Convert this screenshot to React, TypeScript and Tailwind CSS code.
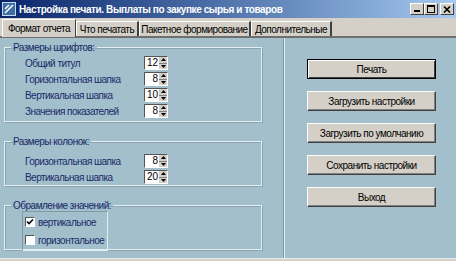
import React from 'react';

const FONT = { fontFamily: '"Liberation Sans", Arial, sans-serif' };

const fontRows = [
  { label: 'Общий титул', value: 12 },
  { label: 'Горизонтальная шапка', value: 8 },
  { label: 'Вертикальная шапка', value: 10 },
  { label: 'Значения показателей', value: 8 },
];

const columnRows = [
  { label: 'Горизонтальная шапка', value: 8 },
  { label: 'Вертикальная шапка', value: 20 },
];

const tabs = [
  { label: 'Формат отчета', w: 'w-[74px]' },
  { label: 'Что печатать', w: 'w-[63px]' },
  { label: 'Пакетное формирование', w: 'w-[112px]' },
  { label: 'Дополнительные', w: 'w-[81px]' },
];

const buttons = ['Печать', 'Загрузить настройки', 'Загрузить по умолчанию', 'Сохранить настройки', 'Выход'];

function Spin({ value }: { value: number }) {
  return (
    <div className="flex h-[14px] w-[24px] border border-t-[#555] border-l-[#555] border-r-white border-b-white bg-white">
      <span className="flex-1 pr-[1px] text-right text-[10px] leading-[12px] text-black">{value}</span>
      <div className="flex w-[8px] flex-col bg-[#d4d0c8]">
        <div className="flex flex-1 items-center justify-center border-b border-[#808080]">
          <svg width="5" height="3" viewBox="0 0 5 3">
            <path d="M2.5 0 L5 3 L0 3 Z" fill="#000" />
          </svg>
        </div>
        <div className="flex flex-1 items-center justify-center">
          <svg width="5" height="3" viewBox="0 0 5 3">
            <path d="M0 0 L5 0 L2.5 3 Z" fill="#000" />
          </svg>
        </div>
      </div>
    </div>
  );
}

function Group({ title, className, children }: { title: string; className: string; children: React.ReactNode }) {
  return (
    <fieldset className={`w-[258px] border border-[#e4edf1] shadow-[inset_1px_1px_0_#8aa6b3,1px_1px_0_#8aa6b3] ${className}`}>
      <legend className="ml-[6px] px-[2px] text-[10px] leading-[11px] tracking-[-0.5px] text-[#1a2a6a]">{title}</legend>
      {children}
    </fieldset>
  );
}

function Row({ label, value }: { label: string; value: number }) {
  return (
    <div className="flex h-[16px] items-center pl-[20px]">
      <span className="w-[119px] text-[10px] tracking-[-0.55px] text-[#1a2a6a]">{label}</span>
      <Spin value={value} />
    </div>
  );
}

function Check({ label, checked }: { label: string; checked: boolean }) {
  return (
    <div className="flex h-[18px] items-center gap-[3px] pl-[2px]">
      <div className="flex h-[10px] w-[10px] items-center justify-center border border-t-[#555] border-l-[#555] border-r-white border-b-white bg-white">
        {checked && (
          <svg width="8" height="8" viewBox="0 0 8 8">
            <path d="M1 3.5 L3 5.5 L7 1.5" stroke="#000" strokeWidth="1.6" fill="none" />
          </svg>
        )}
      </div>
      <span className="text-[10px] tracking-[-0.5px] text-[#1a2a6a]">{label}</span>
    </div>
  );
}

export default function App() {
  return (
    <div className="flex h-[261px] w-[456px] flex-col overflow-hidden bg-[#d4d0c8]" style={FONT}>
      {/* title bar */}
      <div className="flex h-[18px] items-center bg-gradient-to-r from-[#0a246a] to-[#a6caf0] pl-[2px] pr-[2px]">
        <svg width="14" height="14" viewBox="0 0 14 14" className="mr-[3px]">
          <rect x="0.5" y="0.5" width="13" height="13" fill="#3a6ea5" stroke="#c8d8f0" />
          <path d="M3 11 L11 3 M3 7 L7 3" stroke="#fff" strokeWidth="1.6" />
        </svg>
        <span className="flex-1 text-[10px] font-bold tracking-[-0.4px] text-white">
          Настройка печати. Выплаты по закупке сырья и товаров
        </span>
        <div className="flex items-center">
          <div className="flex h-[12px] w-[14px] items-end justify-center border border-t-white border-l-white border-r-[#404040] border-b-[#404040] bg-[#d4d0c8] pb-[2px]">
            <div className="h-[2px] w-[6px] bg-black" />
          </div>
          <div className="flex h-[12px] w-[14px] items-center justify-center border border-t-white border-l-white border-r-[#404040] border-b-[#404040] bg-[#d4d0c8]">
            <div className="h-[8px] w-[8px] border border-t-2 border-black" />
          </div>
          <div className="ml-[2px] flex h-[12px] w-[14px] items-center justify-center border border-t-white border-l-white border-r-[#404040] border-b-[#404040] bg-[#d4d0c8]">
            <svg width="8" height="7" viewBox="0 0 8 7">
              <path d="M1 0.5 L7 6.5 M7 0.5 L1 6.5" stroke="#000" strokeWidth="1.6" />
            </svg>
          </div>
        </div>
      </div>

      {/* tabs */}
      <div className="flex h-[18px] items-end pl-[2px]">
        {tabs.map((t, i) => (
          <div
            key={t.label}
            className={
              i === 0
                ? `relative z-10 -mb-[1px] flex h-[18px] ${t.w} items-center justify-center whitespace-nowrap border border-b-0 border-t-white border-l-white border-r-[#404040] bg-[#d4d0c8] text-[10px] tracking-[-0.5px] text-black`
                : `flex h-[15px] ${t.w} items-center justify-center whitespace-nowrap border-t border-l border-r-2 border-t-white border-l-white border-r-[#404040] text-[10px] tracking-[-0.5px] text-black`
            }
          >
            {t.label}
          </div>
        ))}
      </div>

      {/* content */}
      <div className="flex flex-1 border-t-2 border-[#6e6e6e] bg-[#a3bfcb]">
        <div className="flex w-[283px] flex-col pl-[4px] pt-[4px]">
          <Group title="Размеры шрифтов:" className="h-[80px] pt-[2px]">
            {fontRows.map((r) => (
              <Row key={r.label} label={r.label} value={r.value} />
            ))}
          </Group>
          <Group title="Размеры колонок:" className="mt-[14px] h-[50px] pt-[6px]">
            {columnRows.map((r) => (
              <Row key={r.label} label={r.label} value={r.value} />
            ))}
          </Group>
          <Group title="Обрамление значений:" className="mt-[14px] h-[50px]">
            <div className="ml-[17px] w-[86px] border border-t-[#7f9aa6] border-l-[#7f9aa6] border-r-[#e4edf1] border-b-[#e4edf1] py-[1px]">
              <Check label="вертикальное" checked />
              <Check label="горизонтальное" checked={false} />
            </div>
          </Group>
        </div>
        <div className="w-[2px] border-l border-[#7f9aa6] bg-[#e4edf1]" />
        <div className="flex flex-1 flex-col gap-[12px] pl-[22px] pt-[21px]">
          {buttons.map((b, i) => (
            <div
              key={b}
              className={
                i === 0
                  ? 'flex h-[20px] w-[129px] items-center justify-center border border-black bg-[#d4d0c8] shadow-[inset_1px_1px_0_#fff,inset_-1px_-1px_0_#404040] text-[10px] tracking-[-0.5px] text-black'
                  : 'flex h-[20px] w-[129px] items-center justify-center border border-t-white border-l-white border-r-[#404040] border-b-[#404040] bg-[#d4d0c8] shadow-[inset_-1px_-1px_0_#808080] text-[10px] tracking-[-0.5px] text-black'
              }
            >
              {b}
            </div>
          ))}
        </div>
      </div>
      <div className="h-[3px] border-t border-[#e4edf1] bg-[#d4d0c8]" />
    </div>
  );
}
